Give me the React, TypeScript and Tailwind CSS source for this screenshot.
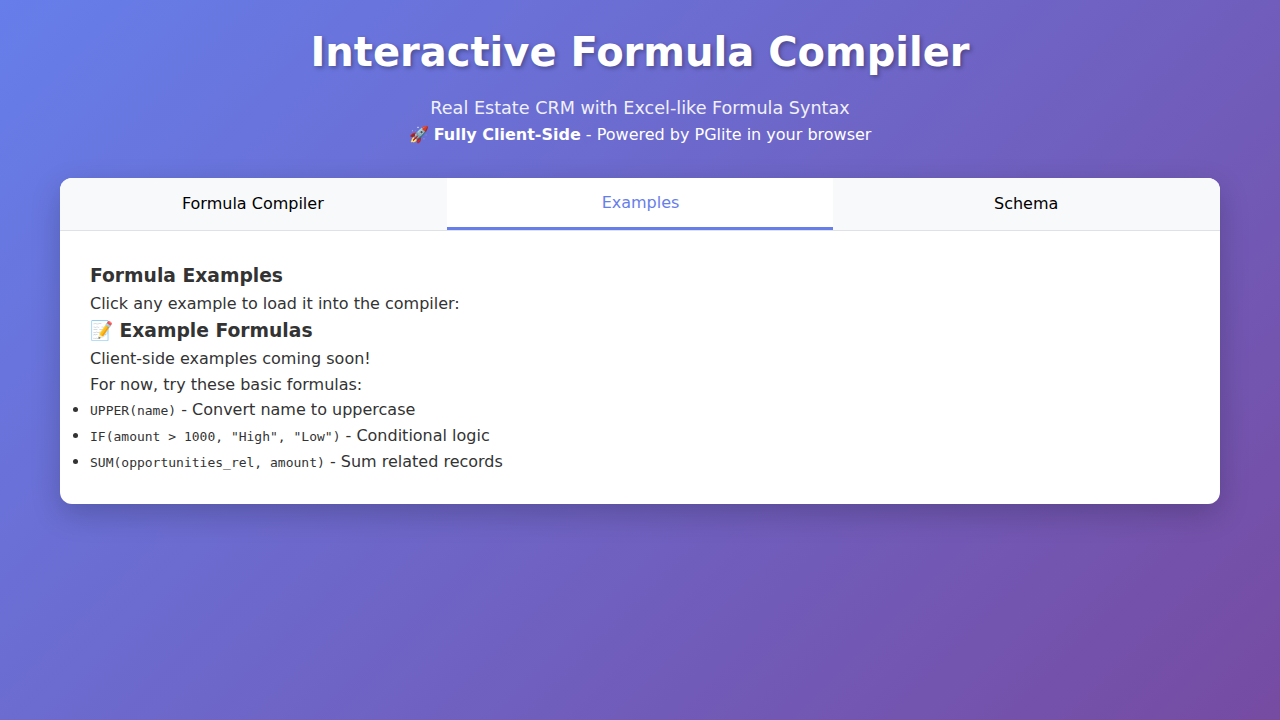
import React, { useState } from "react";

const tabs = ["Formula Compiler", "Examples", "Schema"];

const formulas = [
  { code: "UPPER(name)", text: "Convert name to uppercase" },
  { code: 'IF(amount > 1000, "High", "Low")', text: "Conditional logic" },
  { code: "SUM(opportunities_rel, amount)", text: "Sum related records" },
];

export default function App() {
  const [active, setActive] = useState("Examples");
  return (
    <div className="min-h-screen bg-[linear-gradient(135deg,#667eea_0%,#764ba2_100%)] p-5 font-['DejaVu_Sans',sans-serif] text-base leading-[1.6] text-[#333]">
      <div className="mx-auto max-w-[1160px]">
        <header className="mb-[30px] text-center text-white">
          <h1 className="mb-[10px] text-[40px] leading-[64px] font-bold [text-shadow:2px_2px_4px_rgba(0,0,0,0.3)]">
            Interactive Formula Compiler
          </h1>
          <p className="text-[17.6px] leading-[28.16px] opacity-90">Real Estate CRM with Excel-like Formula Syntax</p>
          <p>
            🚀 <strong>Fully Client-Side</strong> - Powered by PGlite in your browser
          </p>
        </header>
        <main className="overflow-hidden rounded-xl bg-white shadow-[0_10px_30px_rgba(0,0,0,0.2)]">
          <nav className="flex border-b border-[#dee2e6] bg-[#f8f9fa]">
            {tabs.map((tab) => (
              <button
                key={tab}
                onClick={() => setActive(tab)}
                className={
                  tab === active
                    ? "h-[52px] flex-1 border-b-[3px] border-[#667eea] bg-white pl-px text-base leading-[19px] text-[#667eea]"
                    : "h-[52px] flex-1 pr-px text-base leading-[19px] text-black"
                }
              >
                {tab}
              </button>
            ))}
          </nav>
          <section className="p-[30px]">
            <h3 className="text-[18.72px] leading-[29.95px] font-bold">Formula Examples</h3>
            <p>Click any example to load it into the compiler:</p>
            <h3 className="text-[18.72px] leading-[29.95px] font-bold">📝 Example Formulas</h3>
            <p>Client-side examples coming soon!</p>
            <p>For now, try these basic formulas:</p>
            <ul className="list-disc">
              {formulas.map((f) => (
                <li key={f.code}>
                  <code className="font-['DejaVu_Sans_Mono',monospace] text-[13px]">{f.code}</code> - {f.text}
                </li>
              ))}
            </ul>
          </section>
        </main>
      </div>
    </div>
  );
}
